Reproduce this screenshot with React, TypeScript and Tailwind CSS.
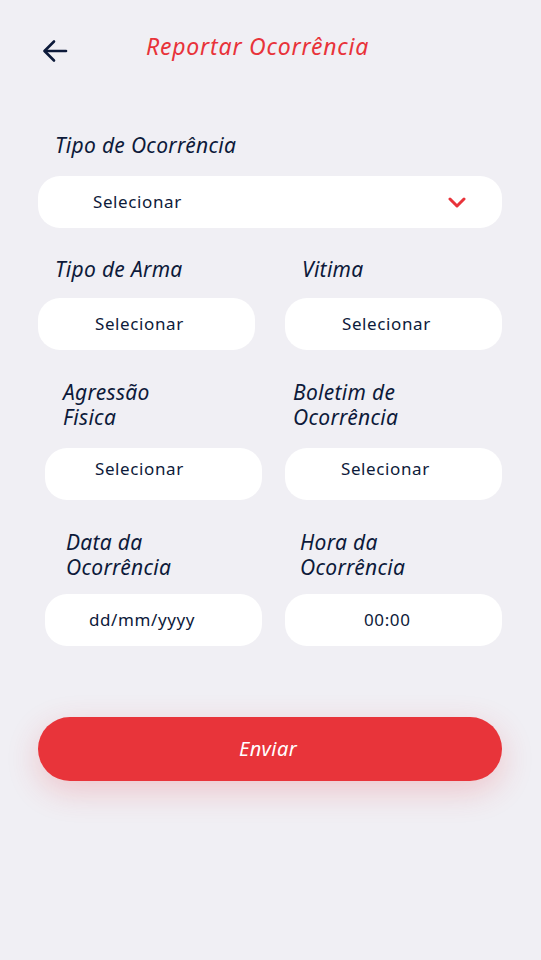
import React from "react";

const font = { fontFamily: '"Noto Sans", "Open Sans", sans-serif' };

function Box({ children, className = "" }: { children: React.ReactNode; className?: string }) {
  return (
    <div className={"h-[52px] w-[217px] rounded-[22px] bg-white flex items-center text-[17px] tracking-[0.6px] text-[#0d1a3a] " + className}>
      {children}
    </div>
  );
}

export default function App() {
  return (
    <div className="w-[541px] h-[960px] bg-[#f0eff4] relative overflow-hidden" style={font}>
      {/* header */}
      <div className="flex items-center h-[50px] pt-[26px] box-content">
        <svg className="ml-[42px]" width="26" height="24" viewBox="0 0 26 24" fill="none" stroke="#0d1a3a" strokeWidth="2.6" strokeLinecap="round" strokeLinejoin="round">
          <path d="M24 12H3" />
          <path d="M12 2.5L2.5 12L12 21.5" />
        </svg>
        <div className="ml-[78px] -mt-[10px] italic text-[#e8333a] text-[23px] tracking-[0.8px]">Reportar Ocorrência</div>
      </div>

      <div className="pl-[55px] mt-[57px] italic text-[21px] tracking-[0.3px] text-[#0d1a3a] leading-[25px]">Tipo de Ocorrência</div>
      <div className="mt-[18px] ml-[38px] w-[464px] h-[52px] rounded-[22px] bg-white flex items-center text-[17px] tracking-[0.6px] text-[#0d1a3a]">
        <span className="ml-[55px]">Selecionar</span>
        <svg className="ml-auto mr-[36px]" width="18" height="11" viewBox="0 0 18 11" fill="none" stroke="#e8333a" strokeWidth="3" strokeLinecap="round" strokeLinejoin="round">
          <path d="M2 2L9 9L16 2" />
        </svg>
      </div>

      {/* row 2 */}
      <div className="flex mt-[29px] ml-[38px] gap-[30px] italic text-[21px] tracking-[0.3px] text-[#0d1a3a] leading-[25px]">
        <div className="w-[217px] pl-[17px]">Tipo de Arma</div>
        <div className="w-[217px] pl-[17px]">Vitima</div>
      </div>
      <div className="flex mt-[16px] ml-[38px] gap-[30px]">
        <Box className="pl-[57px]">Selecionar</Box>
        <Box className="pl-[57px]">Selecionar</Box>
      </div>

      {/* row 3 */}
      <div className="flex mt-[30px] ml-[45px] gap-[23px] italic text-[21px] tracking-[0.3px] text-[#0d1a3a] leading-[25px]">
        <div className="w-[217px] pl-[18px]">Agressão<br />Fisica</div>
        <div className="w-[217px] pl-[8px]">Boletim de<br />Ocorrência</div>
      </div>
      <div className="flex mt-[18px] ml-[45px] gap-[23px]">
        <Box className="pl-[50px] pb-[10px]">Selecionar</Box>
        <Box className="pl-[56px] pb-[10px]">Selecionar</Box>
      </div>

      {/* row 4 */}
      <div className="flex mt-[30px] ml-[45px] gap-[23px] italic text-[21px] tracking-[0.3px] text-[#0d1a3a] leading-[25px]">
        <div className="w-[217px] pl-[21px]">Data da<br />Ocorrência</div>
        <div className="w-[217px] pl-[15px]">Hora da<br />Ocorrência</div>
      </div>
      <div className="flex mt-[14px] ml-[45px] gap-[23px]">
        <Box className="pl-[44px]">dd/mm/yyyy</Box>
        <Box className="pl-[79px]">00:00</Box>
      </div>

      <button className="mt-[71px] ml-[38px] w-[464px] h-[64px] rounded-full bg-[#e8343a] text-white italic text-[20px] tracking-[0.4px] pr-[4px] flex items-center justify-center shadow-[0_10px_32px_rgba(232,52,58,0.22)]">
        Enviar
      </button>
    </div>
  );
}
